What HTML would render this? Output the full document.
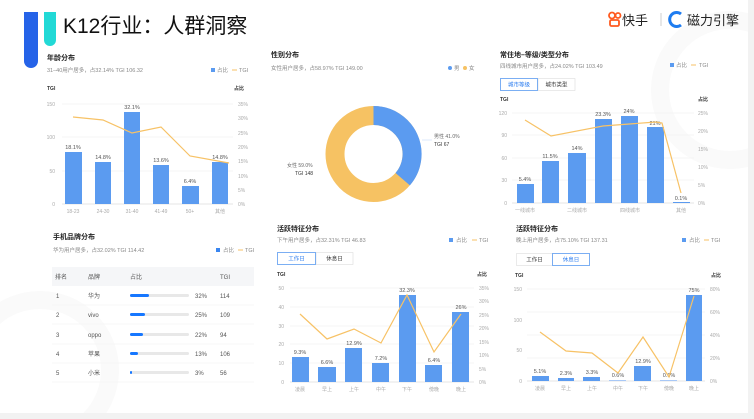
<!DOCTYPE html><html><head><meta charset="utf-8"><style>
html,body{margin:0;padding:0;background:#fff;width:754px;height:419px;overflow:hidden}
svg{display:block;font-family:"Liberation Sans","Noto Sans CJK SC",sans-serif;position:absolute;left:0;top:0}
.t{font-size:7px;font-weight:bold;fill:#222}
.s{font-size:5.5px;fill:#888}
.a{font-size:5px;fill:#aaa}
.v{font-size:5.5px;fill:#555}
.g{stroke:#eee;stroke-width:0.6}
.b{fill:#5b9bf0}
.l{fill:none;stroke:#f7c266;stroke-width:1.2}
.r{font-size:6px;fill:#555}
</style></head><body>
<svg width="754" height="419" viewBox="0 0 754 419">
<circle cx="730" cy="90" r="70" fill="none" stroke="#fafafa" stroke-width="18"/>
<circle cx="40" cy="370" r="70" fill="none" stroke="#fafafa" stroke-width="18"/>
<rect x="748" y="0" width="6" height="419" fill="#f2f2f2"/>
<rect x="0" y="413" width="754" height="6" fill="#f2f2f2"/>
<path d="M24 12h14v49a7 7 0 0 1-14 0z" fill="#2563e8"/>
<path d="M44 12h12v28a6 6 0 0 1-12 0z" fill="#22d9d6"/>
<text x="63" y="33" font-size="21" fill="#111">K12行业：人群洞察</text>
<g fill="none" stroke="#ff5a1f" stroke-width="1.8"><circle cx="612" cy="15.5" r="3"/><circle cx="618" cy="15.5" r="2.5"/><rect x="610" y="20" width="9" height="6" rx="1.5"/></g>
<text x="622" y="25" font-size="13" fill="#222">快手</text>
<line x1="661" y1="13" x2="661" y2="26" stroke="#bbb" stroke-width="0.7"/>
<path d="M681 14a7 7 0 1 0 0 11" fill="none" stroke="#1e7cf0" stroke-width="3"/>
<text x="687" y="25" font-size="13" fill="#222">磁力引擎</text>

<text x="47" y="60" class="t">年龄分布</text>
<text x="47" y="72" class="s">31–40用户居多，占32.14% TGI 106.32</text>
<rect x="211" y="68" width="4" height="4" fill="#5b9bf0"/><text x="217" y="72" class="s" fill="#555">占比</text>
<line x1="232" y1="70" x2="237" y2="70" stroke="#f7c266"/><text x="239" y="72" class="s">TGI</text>
<text x="47" y="90" font-size="5" font-weight="bold" fill="#333">TGI</text><text x="234" y="90" font-size="5" font-weight="bold" fill="#333">占比</text>
<g class="g"><line x1="62" y1="104" x2="233" y2="104"/><line x1="62" y1="137" x2="233" y2="137"/><line x1="62" y1="171" x2="233" y2="171"/><line x1="62" y1="204" x2="233" y2="204" stroke="#ccc"/></g>
<g class="a" text-anchor="end"><text x="55" y="106">150</text><text x="55" y="139">100</text><text x="55" y="173">50</text><text x="55" y="206">0</text></g>
<g class="a"><text x="238" y="106">35%</text><text x="238" y="120">30%</text><text x="238" y="135">25%</text><text x="238" y="149">20%</text><text x="238" y="163">15%</text><text x="238" y="178">10%</text><text x="238" y="192">5%</text><text x="238" y="206">0%</text></g>
<g class="b"><rect x="65" y="152" width="17" height="52"/><rect x="95" y="162" width="16" height="42"/><rect x="124" y="112" width="16" height="92"/><rect x="153" y="165" width="16" height="39"/><rect x="182" y="186" width="17" height="18"/><rect x="212" y="162" width="16" height="42"/></g>
<g class="v" text-anchor="middle"><text x="73" y="149">18.1%</text><text x="103" y="159">14.8%</text><text x="132" y="109">32.1%</text><text x="161" y="162">13.6%</text><text x="190" y="183">6.4%</text><text x="220" y="159">14.8%</text></g>
<g class="a" text-anchor="middle"><text x="73" y="213">18-23</text><text x="103" y="213">24-30</text><text x="132" y="213">31-40</text><text x="161" y="213">41-49</text><text x="190" y="213">50+</text><text x="220" y="213">其他</text></g>
<polyline class="l" points="73,117 103,120 132,133 161,127 190,156 229,163"/>

<text x="271" y="57" class="t">性别分布</text>
<text x="271" y="70" class="s">女性用户居多，占58.97% TGI 149.00</text>
<circle cx="450" cy="68" r="2" fill="#5b9bf0"/><text x="454" y="70" class="s" fill="#555">男</text>
<circle cx="465" cy="68" r="2" fill="#f6c263"/><text x="469" y="70" class="s" fill="#555">女</text>
<circle cx="373.5" cy="154" r="38.5" fill="none" stroke="#f6c263" stroke-width="19"/>
<path d="M373.5 115.5A38.5 38.5 0 0 1 402.7 179.2" fill="none" stroke="#5b9bf0" stroke-width="19"/>
<line x1="422" y1="140" x2="432" y2="140" stroke="#dde8fb"/>
<text x="434" y="138" font-size="5" fill="#666">男性 41.0%</text><text x="434" y="146" font-size="5" fill="#333">TGI 67</text>
<text x="287" y="167" font-size="5" fill="#666">女性 59.0%</text><text x="295" y="175" font-size="5" fill="#333">TGI 148</text>

<text x="500" y="57" class="t">常住地–等级/类型分布</text>
<text x="500" y="68" class="s">四线城市用户居多，占24.02% TGI 103.49</text>
<rect x="670" y="63" width="4" height="4" fill="#5b9bf0"/><text x="676" y="67" class="s" fill="#555">占比</text>
<line x1="691" y1="65" x2="696" y2="65" stroke="#f7c266"/><text x="699" y="67" class="s">TGI</text>
<rect x="538" y="78.5" width="37" height="12" fill="#fff" stroke="#ddd" stroke-width="0.6"/>
<rect x="500.5" y="78.5" width="37" height="12" fill="#fff" stroke="#5b9bf0" stroke-width="0.8"/>
<text x="519" y="86.5" font-size="5.5" fill="#2a7cf0" text-anchor="middle">城市等级</text>
<text x="556.5" y="86.5" font-size="5.5" fill="#333" text-anchor="middle">城市类型</text>
<text x="500" y="101" font-size="5" font-weight="bold" fill="#333">TGI</text><text x="698" y="101" font-size="5" font-weight="bold" fill="#333">占比</text>
<g class="g"><line x1="512" y1="113" x2="694" y2="113"/><line x1="512" y1="135" x2="694" y2="135"/><line x1="512" y1="158" x2="694" y2="158"/><line x1="512" y1="180" x2="694" y2="180"/><line x1="512" y1="203" x2="694" y2="203" stroke="#ccc"/></g>
<g class="a" text-anchor="end"><text x="507" y="115">120</text><text x="507" y="137">90</text><text x="507" y="160">60</text><text x="507" y="182">30</text><text x="507" y="205">0</text></g>
<g class="a"><text x="698" y="115">25%</text><text x="698" y="133">20%</text><text x="698" y="151">15%</text><text x="698" y="169">10%</text><text x="698" y="187">5%</text><text x="698" y="205">0%</text></g>
<g class="b"><rect x="517" y="184" width="17" height="19"/><rect x="542" y="161" width="17" height="42"/><rect x="568" y="153" width="18" height="50"/><rect x="595" y="119" width="17" height="84"/><rect x="621" y="116" width="17" height="87"/><rect x="647" y="127" width="17" height="76"/><rect x="673" y="202" width="17" height="1"/></g>
<g class="v" text-anchor="middle"><text x="525" y="181">5.4%</text><text x="550" y="158">11.5%</text><text x="577" y="150">14%</text><text x="603" y="116">23.3%</text><text x="629" y="113">24%</text><text x="655" y="125">21%</text><text x="681" y="200">0.1%</text></g>
<g class="a" text-anchor="middle"><text x="525" y="212">一线城市</text><text x="577" y="212">二线城市</text><text x="630" y="212">四线城市</text><text x="681" y="212">其他</text></g>
<polyline class="l" points="525,120 551,136 603,126 656,122 662,123 681,193"/>

<text x="53" y="239" class="t">手机品牌分布</text>
<text x="53" y="252" class="s">华为用户居多，占32.02% TGI 114.42</text>
<rect x="216" y="248" width="4" height="4" fill="#3a86f0"/><text x="223" y="252" class="s" fill="#555">占比</text>
<line x1="238" y1="250" x2="243" y2="250" stroke="#f7c266"/><text x="245" y="252" class="s">TGI</text>
<rect x="52" y="267" width="202" height="19" fill="#f5f6f8"/>
<g class="r"><text x="55" y="279">排名</text><text x="88" y="279">品牌</text><text x="130" y="279">占比</text><text x="220" y="279">TGI</text></g>
<g stroke="#f0f0f0" stroke-width="0.6"><line x1="52" y1="305" x2="254" y2="305"/><line x1="52" y1="324" x2="254" y2="324"/><line x1="52" y1="344" x2="254" y2="344"/><line x1="52" y1="363" x2="254" y2="363"/><line x1="52" y1="382" x2="254" y2="382"/></g>
<g fill="#e8e8e8"><rect x="130" y="294" width="59" height="3" rx="1.5"/><rect x="130" y="313" width="59" height="3" rx="1.5"/><rect x="130" y="333" width="59" height="3" rx="1.5"/><rect x="130" y="352" width="59" height="3" rx="1.5"/><rect x="130" y="371" width="59" height="3" rx="1.5"/></g>
<g fill="#1677ff"><rect x="130" y="294" width="19" height="3" rx="1.5"/><rect x="130" y="313" width="15" height="3" rx="1.5"/><rect x="130" y="333" width="13" height="3" rx="1.5"/><rect x="130" y="352" width="8" height="3" rx="1.5"/><rect x="130" y="371" width="2" height="3" rx="1"/></g>
<g class="r" fill="#666"><text x="56" y="298">1</text><text x="88" y="298">华为</text><text x="195" y="298">32%</text><text x="220" y="298">114</text>
<text x="56" y="317">2</text><text x="88" y="317">vivo</text><text x="195" y="317">25%</text><text x="220" y="317">109</text>
<text x="56" y="337">3</text><text x="88" y="337">oppo</text><text x="195" y="337">22%</text><text x="220" y="337">94</text>
<text x="56" y="356">4</text><text x="88" y="356">苹果</text><text x="195" y="356">13%</text><text x="220" y="356">106</text>
<text x="56" y="375">5</text><text x="88" y="375">小米</text><text x="195" y="375">3%</text><text x="220" y="375">56</text></g>

<text x="277" y="231" class="t">活跃特征分布</text>
<text x="277" y="242" class="s">下午用户居多，占32.31% TGI 46.83</text>
<rect x="449" y="238" width="4" height="4" fill="#5b9bf0"/><text x="456" y="242" class="s" fill="#555">占比</text>
<line x1="472" y1="240" x2="477" y2="240" stroke="#f7c266"/><text x="479" y="242" class="s">TGI</text>
<rect x="316" y="252.5" width="37" height="12" fill="#fff" stroke="#ddd" stroke-width="0.6"/>
<rect x="277.5" y="252.5" width="38" height="12" fill="#fff" stroke="#5b9bf0" stroke-width="0.8"/>
<text x="296.5" y="260.5" font-size="5.5" fill="#2a7cf0" text-anchor="middle">工作日</text>
<text x="334.5" y="260.5" font-size="5.5" fill="#333" text-anchor="middle">休息日</text>
<text x="277" y="276" font-size="5" font-weight="bold" fill="#333">TGI</text><text x="477" y="276" font-size="5" font-weight="bold" fill="#333">占比</text>
<g class="g"><line x1="290" y1="288" x2="474" y2="288"/><line x1="290" y1="307" x2="474" y2="307"/><line x1="290" y1="326" x2="474" y2="326"/><line x1="290" y1="344" x2="474" y2="344"/><line x1="290" y1="363" x2="474" y2="363"/><line x1="290" y1="382" x2="474" y2="382" stroke="#ccc"/></g>
<g class="a" text-anchor="end"><text x="284" y="290">50</text><text x="284" y="309">40</text><text x="284" y="328">30</text><text x="284" y="346">20</text><text x="284" y="365">10</text><text x="284" y="384">0</text></g>
<g class="a"><text x="479" y="290">35%</text><text x="479" y="303">30%</text><text x="479" y="317">25%</text><text x="479" y="330">20%</text><text x="479" y="344">15%</text><text x="479" y="357">10%</text><text x="479" y="371">5%</text><text x="479" y="384">0%</text></g>
<g class="b"><rect x="292" y="357" width="17" height="25"/><rect x="318" y="367" width="18" height="15"/><rect x="345" y="348" width="17" height="34"/><rect x="372" y="363" width="17" height="19"/><rect x="399" y="295" width="17" height="87"/><rect x="425" y="365" width="17" height="17"/><rect x="452" y="312" width="17" height="70"/></g>
<g class="v" text-anchor="middle"><text x="300" y="354">9.3%</text><text x="327" y="364">6.6%</text><text x="354" y="345">12.9%</text><text x="381" y="360">7.2%</text><text x="407" y="292">32.3%</text><text x="434" y="362">6.4%</text><text x="461" y="309">26%</text></g>
<g class="a" text-anchor="middle"><text x="300" y="391">凌晨</text><text x="327" y="391">早上</text><text x="354" y="391">上午</text><text x="381" y="391">中午</text><text x="407" y="391">下午</text><text x="434" y="391">傍晚</text><text x="461" y="391">晚上</text></g>
<polyline class="l" points="300,314 327,339 354,329 381,343 407,295 434,352 461,314"/>

<text x="516" y="231" class="t">活跃特征分布</text>
<text x="516" y="242" class="s">晚上用户居多，占75.10% TGI 137.31</text>
<rect x="682" y="238" width="4" height="4" fill="#5b9bf0"/><text x="689" y="242" class="s" fill="#555">占比</text>
<line x1="704" y1="240" x2="709" y2="240" stroke="#f7c266"/><text x="711" y="242" class="s">TGI</text>
<rect x="516.5" y="253.5" width="36" height="12" fill="#fff" stroke="#ddd" stroke-width="0.6"/>
<rect x="552.5" y="253.5" width="37" height="12" fill="#fff" stroke="#5b9bf0" stroke-width="0.8"/>
<text x="534.5" y="261.5" font-size="5.5" fill="#333" text-anchor="middle">工作日</text>
<text x="571" y="261.5" font-size="5.5" fill="#2a7cf0" text-anchor="middle">休息日</text>
<text x="515" y="277" font-size="5" font-weight="bold" fill="#333">TGI</text><text x="711" y="277" font-size="5" font-weight="bold" fill="#333">占比</text>
<g class="g"><line x1="527" y1="289" x2="705" y2="289"/><line x1="527" y1="312" x2="705" y2="312"/><line x1="527" y1="335" x2="705" y2="335"/><line x1="527" y1="358" x2="705" y2="358"/><line x1="527" y1="381" x2="705" y2="381" stroke="#ccc"/></g>
<g class="a" text-anchor="end"><text x="522" y="291">150</text><text x="522" y="322">100</text><text x="522" y="352">50</text><text x="522" y="383">0</text></g>
<g class="a"><text x="710" y="291">80%</text><text x="710" y="314">60%</text><text x="710" y="337">40%</text><text x="710" y="360">20%</text><text x="710" y="383">0%</text></g>
<g class="b"><rect x="532" y="376" width="17" height="5"/><rect x="558" y="378" width="16" height="3"/><rect x="583" y="377" width="17" height="4"/><rect x="609" y="380" width="17" height="1" fill="#a8c8f6"/><rect x="634" y="366" width="17" height="15"/><rect x="660" y="380" width="17" height="1" fill="#a8c8f6"/><rect x="686" y="295" width="16" height="86"/></g>
<g class="v" text-anchor="middle"><text x="540" y="373">5.1%</text><text x="566" y="375">2.3%</text><text x="592" y="374">3.3%</text><text x="618" y="377">0.6%</text><text x="643" y="363">12.9%</text><text x="669" y="377">0.6%</text><text x="694" y="292">75%</text></g>
<g class="a" text-anchor="middle"><text x="540" y="390">凌晨</text><text x="566" y="390">早上</text><text x="592" y="390">上午</text><text x="618" y="390">中午</text><text x="643" y="390">下午</text><text x="669" y="390">傍晚</text><text x="694" y="390">晚上</text></g>
<polyline class="l" points="540,332 566,351 592,353 618,373 643,337 669,377 694,296"/>
</svg>
</body></html>
